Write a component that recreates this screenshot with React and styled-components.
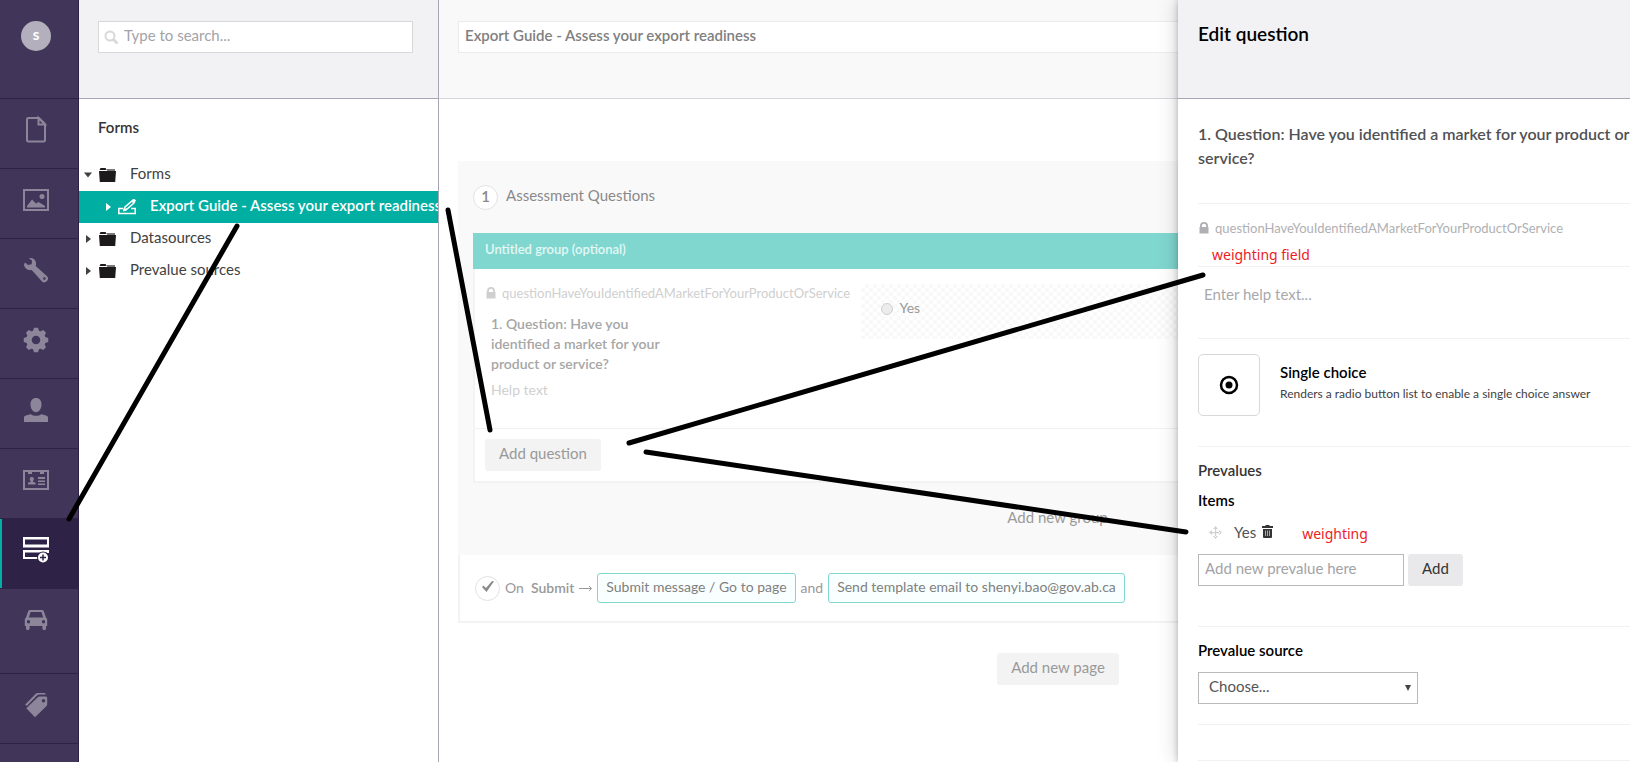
import styled, { createGlobalStyle } from 'styled-components'

const GlobalStyle = createGlobalStyle`
  *,
  *::before,
  *::after {
    box-sizing: border-box;
  }
  html,
  body,
  #root {
    height: 100%;
    margin: 0;
  }
  body {
    overflow: hidden;
    font-family: Lato, 'Open Sans', sans-serif;
    font-size: 15px;
    line-height: 20px;
    color: #343434;
    background: #fff;
  }
  button,
  input,
  select {
    font: inherit;
  }
  h1,
  h2,
  h3,
  h4,
  p,
  ul {
    margin: 0;
    padding: 0;
    font-size: 15px;
    list-style: none;
  }
`

const Shell = styled.div`
  position: relative;
  display: flex;
  width: calc(100% + 48px);
  height: 100%;
  overflow: hidden;
`

/* left app bar */
const AppBar = styled.nav`
  flex: 0 0 79px;
  background: #413659;
  border-right: 1px solid #2e2246;
`
const AvatarBox = styled.div`
  height: 99px;
  padding: 21px 0 0 21px;
  border-bottom: 1px solid #2e2246;
`
const Avatar = styled.div`
  width: 30px;
  height: 30px;
  border-radius: 50%;
  background: #b3afbd;
  color: #fff;
  font-size: 12px;
  font-weight: 900;
  line-height: 30px;
  text-align: center;
`
const AppLink = styled.a`
  display: block;
  height: ${(props) => (props.$tall ? '85px' : '70px')};
  padding: 16px 0 0 21px;
  border-bottom: 1px solid #2e2246;
  color: ${(props) => (props.$active ? '#fff' : '#8d869b')};
  background: ${(props) => (props.$active ? '#2e2246' : 'transparent')};
  box-shadow: ${(props) => (props.$active ? 'inset 2px 0 0 #00aea2' : 'none')};

  svg {
    display: block;
  }
`

/* tree column */
const TreeColumn = styled.aside`
  flex: 0 0 360px;
  overflow: hidden;
  border-right: 1px solid #a9a6b5;
`
const Bar = styled.header`
  height: 99px;
  padding: 21px 20px 0 19px;
  background: ${(props) => (props.$dim ? '#f9f9f9' : '#f2f2f4')};
  border-bottom: 1px solid ${(props) => (props.$dim ? '#d8d6dd' : '#a9a6b5')};
`
const SearchBox = styled.label`
  display: flex;
  align-items: center;
  gap: 5px;
  height: 32px;
  margin-right: 5px;
  padding-left: 5px;
  background: #fff;
  border: 1px solid #d8d7d9;
`
const SearchInput = styled.input`
  flex: 1;
  min-width: 0;
  padding: 0 0 4px;
  border: 0;
  outline: 0;
  background: none;

  &::placeholder {
    color: #a3a3a7;
  }
`
const TreeTitle = styled.h2`
  padding: 18px 19px 22px;
  font-weight: 600;
`
const TreeLink = styled.a`
  display: flex;
  align-items: center;
  height: 32px;
  padding-left: ${(props) => (props.$nested ? '25px' : '5px')};
  padding-bottom: 4px;
  color: ${(props) => (props.$nested ? '#fff' : '#414141')};
  background: ${(props) => (props.$nested ? '#00aea2' : 'none')};
  font-weight: ${(props) => (props.$nested ? 600 : 400)};
  text-decoration: none;
  white-space: nowrap;

  svg {
    flex: none;
    margin-top: 3px;
  }
  span {
    margin-left: 14px;
  }
`
const Caret = styled.svg`
  width: 8px;
  height: 8px;
  margin-right: ${(props) => (props.$nested ? '6px' : '7px')};
`

/* form designer */
const Editor = styled.main`
  flex: 1;
  min-width: 0;
`
const NameInput = styled.input`
  width: 100%;
  height: 32px;
  padding: 0 6px 4px;
  border: 1px solid #ececec;
  background: #fff;
  color: #808080;
  font-weight: 600;
`
const Canvas = styled.div`
  padding: 62px 20px 30px 19px;
`
const Page = styled.section`
  padding: 0 16px 0 15px;
  background: #f9f9f9;
`
const PageHead = styled.div`
  display: flex;
  gap: 8px;
  height: 72px;
  padding-top: 24px;
`
const Circle = styled.span`
  display: flex;
  align-items: center;
  justify-content: center;
  flex: none;
  width: 25px;
  height: 25px;
  padding-bottom: 3px;
  border: 1px solid #e2e2e2;
  border-radius: 50%;
  background: #fff;
  color: #8a8a8a;
  font-weight: 600;
`
const PageName = styled.h3`
  color: #8a8a8a;
  font-weight: 400;
`
const GroupHead = styled.h4`
  height: 36px;
  padding: 6px 12px;
  background: #80d7d0;
  color: #e3f7f5;
  font-size: 13px;
  font-weight: 600;
`
const Group = styled.div`
  border: 2px solid #f3f3f3;
  border-top: 0;
  background: #fff;
`
const Question = styled.div`
  display: grid;
  grid-template-columns: 33% 1fr;
  column-gap: 2px;
  padding: 15px 0 28px;
`
const Alias = styled.div`
  display: flex;
  align-items: center;
  gap: 6px;
  height: 18px;
  padding-left: ${(props) => props.$indent};
  color: ${(props) => props.$color};
  font-size: 13px;
  white-space: nowrap;
`
const QuestionText = styled.p`
  max-width: 200px;
  padding: 12px 0 6px 16px;
  color: #a6a6a6;
  font-size: 14px;
  font-weight: 600;
`
const HelpText = styled.p`
  padding-left: 16px;
  color: #cfcfcf;
  font-size: 14px;
`
const Preview = styled.label`
  display: flex;
  align-items: flex-start;
  gap: 6px;
  height: 55px;
  padding: 14px 20px;
  background: repeating-conic-gradient(#f9f9f9 0 25%, #fff 0 50%) 0 0 / 8px 8px;
  color: #999;
  font-size: 14px;
`
const Radio = styled.input`
  appearance: none;
  width: 12px;
  height: 12px;
  margin: 5px 0 0;
  border: 1px solid #d0d0d0;
  border-radius: 50%;
  background: #ececec;
`
const GroupFoot = styled.div`
  padding: 10px;
  border-top: 1px solid #f1f1f1;
`
const Button = styled.button`
  height: 32px;
  padding: 0 14px 4px;
  border: 0;
  border-radius: 3px;
  background: ${(props) => (props.$dim ? '#f3f3f3' : '#e9e9eb')};
  color: ${(props) => (props.$dim ? '#999' : '#343434')};
`
const TextButton = styled.button`
  display: block;
  height: 72px;
  margin: 0 auto;
  padding: 0 0 4px;
  border: 0;
  background: none;
  color: #999;
`
const SubmitRow = styled.div`
  display: flex;
  align-items: center;
  gap: 5px;
  height: 68px;
  padding-left: 15px;
  border: 2px solid #f3f3f3;
  border-top: 0;
  color: #999;
  font-size: 14px;
  white-space: nowrap;

  b {
    margin-left: 2px;
    font-weight: 600;
  }
`
const Action = styled.a`
  height: 30px;
  padding: 3px 8px;
  border: 1px solid #80d7d0;
  border-radius: 3px;
  background: #f9fffe;
  color: #808080;
  text-decoration: none;
`
const Centered = styled.div`
  display: flex;
  justify-content: center;
  padding-top: 30px;
`

/* slide-in panel covers the designer */
const Panel = styled.section`
  position: absolute;
  top: 0;
  right: 0;
  bottom: 0;
  width: 500px;
  overflow: hidden;
  background: #fff;
  box-shadow: 0 0 20px rgba(0, 0, 0, 0.19), 0 0 6px rgba(0, 0, 0, 0.23);
`
const PanelTitle = styled.h1`
  padding-left: 1px;
  color: #000;
  font-size: 19px;
  font-weight: 600;
  line-height: 26px;
`
const PanelBody = styled.div`
  padding: 0 20px;
`
const Part = styled.div`
  padding: ${(props) => props.$pad};
  border-bottom: 1px solid #f1f1f2;
`
const PanelQuestion = styled.p`
  color: #515154;
  font-size: 16px;
  font-weight: 600;
  line-height: 24px;
`
const Note = styled.p`
  color: #ed1c24;
  font-family: 'Noto Sans', sans-serif;
  font-size: 14px;
`
const FieldNote = styled(Note)`
  padding: 8px 0 1px 14px;
`
const ItemNote = styled(Note)`
  padding-top: 4px;
`
const HelpInput = styled.input`
  display: block;
  width: 100%;
  height: 20px;
  padding: 0 6px;
  border: 0;

  &::placeholder {
    color: #a9a9ac;
  }
`
const TypeRow = styled.div`
  display: flex;
  gap: 20px;
`
const TypeButton = styled.button`
  display: flex;
  align-items: center;
  justify-content: center;
  width: 62px;
  height: 62px;
  padding: 0;
  border: 1px solid #d8d7d9;
  border-radius: 5px;
  background: #fff;
`
const TypeName = styled.h3`
  padding: 8px 0 2px;
  color: #000;
  font-weight: 600;
`
const TypeInfo = styled.p`
  color: #414141;
  font-size: 12px;
`
const PartTitle = styled.h2`
  margin-bottom: 10px;
  font-weight: 600;
`
const FieldLabel = styled.label`
  display: block;
  margin-bottom: 12px;
  color: #000;
  font-weight: 600;
`
const Item = styled.div`
  display: flex;
  align-items: center;
  height: 20px;
  margin-bottom: 12px;
  padding-left: 11px;
`
const ItemName = styled.span`
  margin: 0 6px 0 12px;
  color: #515154;
`
const IconButton = styled.button`
  display: flex;
  margin-right: 29px;
  padding: 0 0 2px;
  border: 0;
  background: none;
`
const AddRow = styled.div`
  display: flex;
  gap: 4px;
`
const ValueInput = styled.input`
  width: 206px;
  height: 32px;
  padding: 0 6px 4px;
  border: 1px solid #b9b9bd;

  &::placeholder {
    color: #a3a3a7;
  }
`
const SelectBox = styled.div`
  display: grid;
  align-items: center;
  width: 220px;

  > * {
    grid-area: 1 / 1;
  }
  svg {
    justify-self: end;
    margin-right: 7px;
    pointer-events: none;
  }
`
const Select = styled.select`
  appearance: none;
  height: 32px;
  padding: 0 10px 4px;
  border: 1px solid #b9b9bd;
  border-radius: 0;
  background: #fff;
  color: #555;
`

const Strokes = styled.svg`
  position: absolute;
  top: 0;
  left: 0;
  pointer-events: none;
`

const appIcons = {
  Content: (
    <path
      fill="none"
      stroke="currentColor"
      strokeWidth="2"
      d="M7.500 3h10.500l6 6v16q0 1.500-1.500 1.500h-15q-1.500 0-1.500-1.500V4.500Q6 3 7.500 3zM17.500 3v6.500H24z"
    />
  ),
  Media: (
    <>
      <path fill="none" stroke="currentColor" strokeWidth="2" d="M3 5h24v20H3z" />
      <circle cx="21" cy="11.500" r="2.500" fill="currentColor" />
      <path fill="currentColor" d="M6 22.500V21l5-6.500 4 4 2.500-1.500 6.500 4v1.500z" />
    </>
  ),
  Settings: (
    <path
      fill="currentColor"
      fillRule="evenodd"
      d="M8 3.200c3.500-.6 6.500 1.200 7 4.500.2 1.300 0 2.300-.3 3.200L25.800 21a3.600 3.600 0 0 1-5 5.200L10.700 15c-4 .8-7.300-2-7.700-5.500L4 7.400l3 2.600 3.600-.7.500-3.600zM23.300 22.200a1.300 1.300 0 1 0 .1 2.600 1.300 1.300 0 0 0-.1-2.600z"
    />
  ),
  Developer: (
    <g transform="translate(15 15)" fill="currentColor">
      <path
        fillRule="evenodd"
        d="M0-9.800A9.800 9.800 0 1 0 0 9.800 9.800 9.800 0 1 0 0-9.800zM0-4.300A4.300 4.300 0 1 1 0 4.300 4.300 4.300 0 1 1 0-4.300z"
      />
      {[0, 45, 90, 135, 180, 225, 270, 315].map((angle) => (
        <path key={angle} transform={`rotate(${angle})`} d="M-3-9l1-3.200h4L3-9z" />
      ))}
    </g>
  ),
  Users: (
    <path
      fill="currentColor"
      d="M15 3c3.500 0 5.500 2.600 5.500 6.500 0 3.800-2.300 7.800-5.500 7.800s-5.500-4-5.500-7.800C9.500 5.600 11.500 3 15 3zM3 27v-4.500c0-1.500 2-2.300 7-3.300 1 1 3 1.600 5 1.600s4-.6 5-1.600c5 1 7 1.800 7 3.300V27z"
    />
  ),
  Members: (
    <>
      <path fill="none" stroke="currentColor" strokeWidth="2" d="M3 6h24v18H3z" />
      <path
        fill="currentColor"
        d="M7 6h4v3H7zM19 6h4v3h-4zM17 12h7v2h-7zM17 15.500h7v1.500h-7zM17 18.500h7V20h-7zM7 19.500v-1.800l3-1c-2-2-1.500-4.700.8-4.700s2.800 2.700.8 4.700l3 1v1.800z"
      />
    </>
  ),
  Forms: (
    <>
      <path
        fill="none"
        stroke="currentColor"
        strokeWidth="2"
        d="M3 3h24v8H3zM18 23H3v-7h24v2"
      />
      <path fill="currentColor" d="M2 9.500h26V12.500H2zM2 15h26v2.500H2zM2 2h26v2.500H2z" />
      <circle cx="22" cy="22.500" r="6" fill="#2e2246" />
      <circle cx="22" cy="22.500" r="5" fill="currentColor" />
      <path stroke="#2e2246" strokeWidth="1.500" d="M22 19.500v6M19 22.500h6" />
    </>
  ),
  Cars: (
    <path
      fill="currentColor"
      fillRule="evenodd"
      d="M9.500 5h11c1.200 0 2 .5 2.400 1.500l2 6c.8.500 1.300 1.200 1.300 2.500v6H25v2.500q0 1.500-1.800 1.500t-1.800-1.500V21H8.600v2.500Q8.600 25 6.800 25T5 23.500V21H3.800v-6c0-1.300.5-2 1.300-2.500l2-6C7.500 5.500 8.300 5 9.500 5zm0 2L7.800 12.500h14.400L20.500 7zM7.500 15a1.700 1.700 0 1 0 0 3.400 1.700 1.700 0 0 0 0-3.400zm15 0a1.700 1.700 0 1 0 0 3.400 1.700 1.700 0 0 0 0-3.400z"
    />
  ),
  Tags: (
    <path
      fill="currentColor"
      fillRule="evenodd"
      d="M4.200 14.500 14.800 3.700q.7-.7 1.700-.7h6.300c1.200 0 2 .5 2 1.500h-6.300q-1.500 0-2.500 1L5.700 16zM18.500 6.500h6c1 0 1.700.7 1.700 1.700v6c0 .7-.3 1.200-.7 1.700L14 27.300l-8.700-9L16.800 7.200q.7-.7 1.700-.7zM22.500 9a1.800 1.800 0 1 0 0 3.600 1.800 1.800 0 0 0 0-3.600z"
    />
  ),
}

const treeItems = ['Datasources', 'Prevalue sources']

function FolderIcon() {
  return (
    <svg width="17" height="14" viewBox="0 0 17 14">
      <path fill="#777" d="M8 1h8v2H8z" />
      <path fill="#1d1a1c" d="M1.500 0h5l1 1.500V2h-7zM0 3h17l-.8 11H.8z" />
    </svg>
  )
}

function TreeCaret({ open, nested }) {
  return (
    <Caret $nested={nested} viewBox="0 0 8 8">
      <path fill="currentColor" d={open ? 'M0 1.500h8L4 6.500z' : 'M2 0l5 4-5 4z'} />
    </Caret>
  )
}

function LockIcon() {
  return (
    <svg width="10" height="12" viewBox="0 0 10 12">
      <path
        fill="currentColor"
        fillRule="evenodd"
        d="M1 5V4a4 4 0 0 1 8 0v1h.5v6.500H.5V5zM2.800 5h4.400V4a2.200 2.200 0 0 0-4.400 0z"
      />
    </svg>
  )
}

function Tree() {
  return (
    <TreeColumn>
      <Bar>
        <SearchBox>
          <svg width="15" height="15" viewBox="0 0 15 15" fill="none" stroke="#d8d7d9">
            <circle cx="6" cy="6" r="4.500" strokeWidth="2" />
            <path d="M9.500 9.500l4 4" strokeWidth="2.500" />
          </svg>
          <SearchInput type="text" aria-label="Search" placeholder="Type to search..." />
        </SearchBox>
      </Bar>
      <TreeTitle>Forms</TreeTitle>
      <ul>
        <li>
          <TreeLink href="#forms">
            <TreeCaret open />
            <FolderIcon />
            <span>Forms</span>
          </TreeLink>
        </li>
        <li>
          <TreeLink href="#export-guide" $nested>
            <TreeCaret nested />
            <svg width="18" height="16" viewBox="0 0 18 16">
              <path
                fill="none"
                stroke="currentColor"
                strokeWidth="1.500"
                d="M5 9.500H.8v5h16.400v-5H13"
              />
              <path fill="none" stroke="currentColor" strokeWidth="1.500" d="M6 11l1-3 7-6 2 2-7 6z" />
              <path fill="currentColor" d="M13.500 1.500L15 0h1.500L18 1.500 16.500 4zM5 12.500l1-4 3 3z" />
            </svg>
            <span>Export Guide - Assess your export readiness</span>
          </TreeLink>
        </li>
        {treeItems.map((item) => (
          <li key={item}>
            <TreeLink href="#tree">
              <TreeCaret />
              <FolderIcon />
              <span>{item}</span>
            </TreeLink>
          </li>
        ))}
      </ul>
    </TreeColumn>
  )
}

function Designer() {
  return (
    <Editor>
      <Bar $dim>
        <NameInput
          type="text"
          aria-label="Form name"
          defaultValue="Export Guide - Assess your export readiness"
        />
      </Bar>
      <Canvas>
        <Page>
          <PageHead>
            <Circle>1</Circle>
            <PageName>Assessment Questions</PageName>
          </PageHead>
          <GroupHead>Untitled group (optional)</GroupHead>
          <Group>
            <Question>
              <div>
                <Alias $indent="11px" $color="#cfcfcf">
                  <LockIcon />
                  questionHaveYouIdentifiedAMarketForYourProductOrService
                </Alias>
                <QuestionText>
                  1. Question: Have you identified a market for your product or
                  service?
                </QuestionText>
                <HelpText>Help text</HelpText>
              </div>
              <Preview>
                <Radio type="radio" name="answer" />
                Yes
              </Preview>
            </Question>
            <GroupFoot>
              <Button $dim>Add question</Button>
            </GroupFoot>
          </Group>
          <TextButton>Add new group</TextButton>
        </Page>
        <SubmitRow>
          <Circle>
            <svg width="12" height="11" viewBox="0 0 12 11">
              <path fill="currentColor" d="M0 6l1.500-1.500L4 7l6-7 2 .3L4.500 11z" />
            </svg>
          </Circle>
          <span>On</span>
          <b>Submit</b>
          <svg width="13" height="8" viewBox="0 0 13 8">
            <path fill="none" stroke="currentColor" d="M0 4.500h12.500M10 2l2.500 2.500L10 7" />
          </svg>
          <Action href="#message">Submit message / Go to page</Action>
          <span>and</span>
          <Action href="#workflow">Send template email to shenyi.bao@gov.ab.ca</Action>
        </SubmitRow>
        <Centered>
          <Button $dim>Add new page</Button>
        </Centered>
      </Canvas>
    </Editor>
  )
}

function EditPanel() {
  return (
    <Panel>
      <Bar>
        <PanelTitle>Edit question</PanelTitle>
      </Bar>
      <PanelBody>
        <Part $pad="23px 0 33px">
          <PanelQuestion>
            1. Question: Have you identified a market for your product or service?
          </PanelQuestion>
        </Part>
        <Part $pad="15px 0 0">
          <Alias $indent="1px" $color="#b0b0b3">
            <LockIcon />
            questionHaveYouIdentifiedAMarketForYourProductOrService
          </Alias>
          <FieldNote>weighting field</FieldNote>
        </Part>
        <Part $pad="17px 0 34px">
          <HelpInput type="text" aria-label="Help text" placeholder="Enter help text..." />
        </Part>
        <Part $pad="15px 0 30px">
          <TypeRow>
            <TypeButton aria-label="Change answer type">
              <svg width="20" height="20" viewBox="0 0 20 20">
                <circle cx="10" cy="10" r="8" fill="none" stroke="#000" strokeWidth="2.500" />
                <circle cx="10" cy="10" r="3.500" />
              </svg>
            </TypeButton>
            <div>
              <TypeName>Single choice</TypeName>
              <TypeInfo>Renders a radio button list to enable a single choice answer</TypeInfo>
            </div>
          </TypeRow>
        </Part>
        <Part $pad="13px 0 40px">
          <PartTitle>Prevalues</PartTitle>
          <FieldLabel htmlFor="prevalue">Items</FieldLabel>
          <Item>
            <svg width="13" height="13" viewBox="0 0 13 13" fill="#d0d0d3">
              <path d="M6 2h1.200v9H6zM2 6h9v1.200H2zM6.500 0L9 3H4zM6.500 13L9 10H4zM0 6.500L3 4v5zM13 6.500L10 4v5z" />
            </svg>
            <ItemName>Yes</ItemName>
            <IconButton aria-label="Remove Yes">
              <svg width="11" height="13" viewBox="0 0 11 13">
                <path
                  fill="#343434"
                  d="M3.500 0h4v1H11v2H0V1h3.500zM1 4h9v8q0 1-1 1H2q-1 0-1-1z"
                />
                <path stroke="#aaa" d="M3.500 5.500v5.500M5.500 5.500v5.500M7.500 5.500v5.500" />
              </svg>
            </IconButton>
            <ItemNote>weighting</ItemNote>
          </Item>
          <AddRow>
            <ValueInput id="prevalue" type="text" placeholder="Add new prevalue here" />
            <Button>Add</Button>
          </AddRow>
        </Part>
        <Part $pad="13px 0 20px">
          <FieldLabel htmlFor="source">Prevalue source</FieldLabel>
          <SelectBox>
            <Select id="source">
              <option>Choose...</option>
            </Select>
            <svg width="6" height="6" viewBox="0 0 6 6">
              <path fill="#444" d="M0 0h6L3 6z" />
            </svg>
          </SelectBox>
        </Part>
        <Part $pad="35px 0 0" />
      </PanelBody>
    </Panel>
  )
}

function App() {
  return (
    <>
      <GlobalStyle />
      <Shell>
        <AppBar>
          <AvatarBox>
            <Avatar>S</Avatar>
          </AvatarBox>
          {Object.entries(appIcons).map(([name, icon]) => (
            <AppLink
              key={name}
              href={`#${name}`}
              aria-label={name}
              $active={name === 'Forms'}
              $tall={name === 'Cars'}
            >
              <svg width="30" height="30" viewBox="0 0 30 30">
                {icon}
              </svg>
            </AppLink>
          ))}
        </AppBar>
        <Tree />
        <Designer />
        <EditPanel />
        <Strokes width="1630" height="762" viewBox="0 0 1630 762">
          <path
            fill="none"
            stroke="#000"
            strokeWidth="5"
            strokeLinecap="round"
            d="M237 226L69 519M448 210l42 220M629 443l574-168M646 452l540 80"
          />
        </Strokes>
      </Shell>
    </>
  )
}

export default App
